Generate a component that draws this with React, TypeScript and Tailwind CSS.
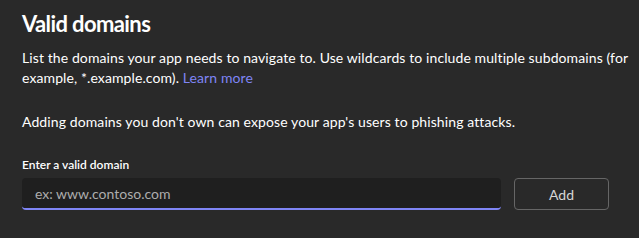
export default function App() {
  return (
    <div className="h-[238px] w-[639px] overflow-hidden bg-[#292929] pl-[22px] pr-[8px] pt-[8px] font-['Lato',sans-serif] text-white">
      <h1 className="text-[22px] font-bold leading-[32px] tracking-[-0.6px]">
        Valid domains
      </h1>

      <p className="mt-[8px] text-[14px] leading-[20px] tracking-[0.1px] text-[#ffffff]">
        List the domains your app needs to navigate to. Use wildcards to include
        multiple subdomains (for example, *.example.com).{" "}
        <a href="#" className="text-[#7f85f5]">
          Learn more
        </a>
      </p>

      <p className="mt-[24px] text-[14px] leading-[20px] tracking-[0.1px]">
        Adding domains you don't own can expose your app's users to phishing
        attacks.
      </p>

      <label
        htmlFor="domain"
        className="mt-[25px] block text-[12px] font-semibold leading-[16px]"
      >
        Enter a valid domain
      </label>

      <div className="mt-[5px] flex items-start gap-[13px]">
        <input
          id="domain"
          placeholder="ex: www.contoso.com"
          className="h-[32px] w-[479px] rounded-[4px] border-b-2 border-[#7f85f5] bg-[#1f1f1f] px-[13px] text-[14px] text-white outline-none placeholder:text-[#adadad]"
        />
        <button
          type="button"
          className="h-[32px] w-[95px] rounded-[4px] border border-[#666666] text-[14px] text-[#d6d6d6]"
        >
          Add
        </button>
      </div>
    </div>
  );
}
